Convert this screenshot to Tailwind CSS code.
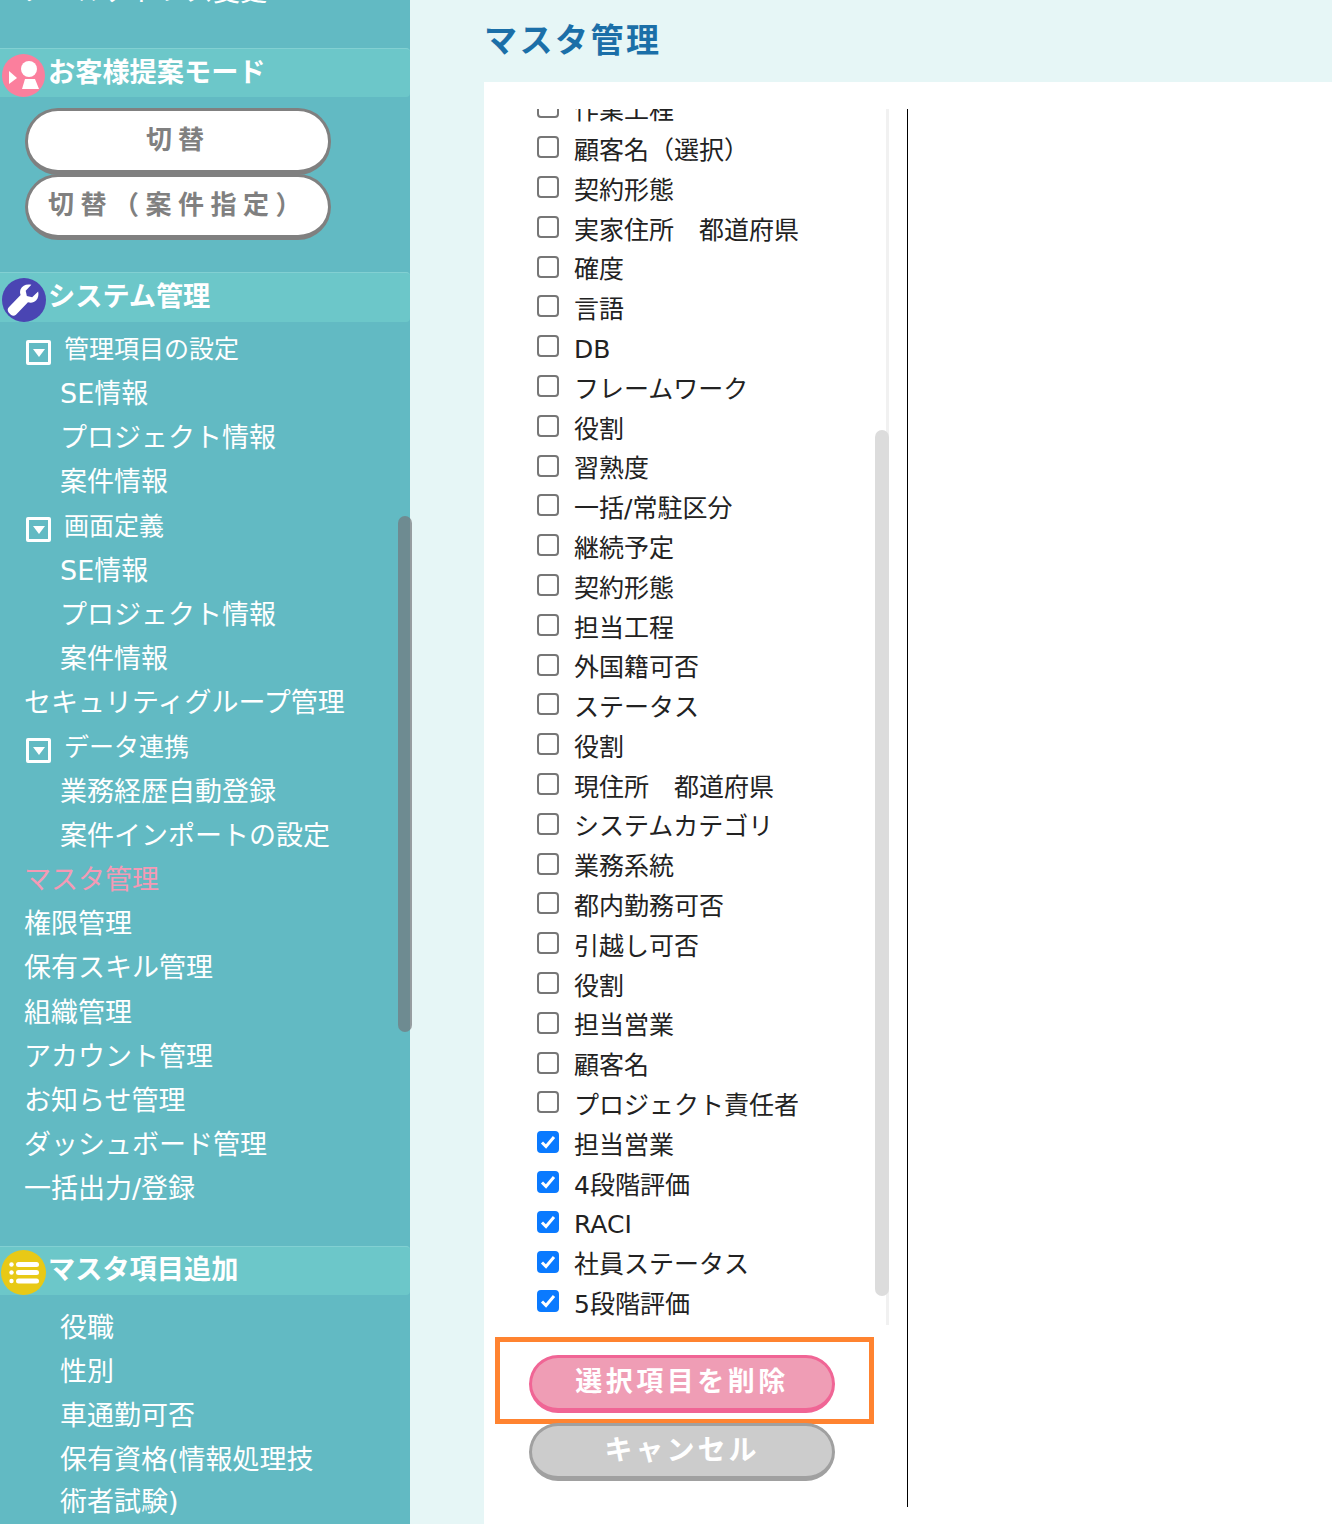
<!doctype html>
<html lang="ja">
<head>
<meta charset="UTF-8" />
<title>マスタ管理</title>
<script src="https://cdn.jsdelivr.net/npm/@tailwindcss/browser@4"></script>
</head>
<body class="m-0 h-[1524px] w-[1332px] overflow-hidden bg-[#e6f6f6] font-['DejaVu_Sans','Noto_Sans_CJK_JP',sans-serif]">
<div class="flex h-[1524px]">

  <!-- sidebar -->
  <aside class="relative h-[1524px] w-[410px] shrink-0 overflow-visible bg-[#62bac3] text-[27px] text-white">
    <div class="h-[48px] overflow-hidden">
      <div class="-mt-[23px] pl-[24px] leading-[30px]">メールアドレス変更</div>
    </div>

    <div class="relative h-[49px] rounded-tr rounded-br border-t border-[#82d0d2] bg-[#6cc7c9] pl-[48px] text-[27.200px] leading-[48px] font-bold">
      <span class="absolute top-[5px] left-[2px] flex h-[43px] w-[43px] items-center justify-center rounded-full bg-[#fb7f9d]">
        <svg width="43" height="43" viewBox="0 0 43 43"><circle cx="27" cy="15" r="8" fill="#fff"/><path d="M20 35l3-10h10l4 10z" fill="#fff"/><path d="M7 17l8 7-8 6z" fill="#fff"/></svg>
      </span>
      お客様提案モード
    </div>
    <div class="flex flex-col pt-[11px] pl-[25px]">
      <button class="h-[67px] w-[306px] rounded-[33px] border-[3px] border-b-[5px] border-[#808080] bg-white pb-[1px] text-center text-[26px] font-bold tracking-[6px] text-[#808080]">切替</button>
      <button class="-mt-[1px] h-[66px] w-[306px] rounded-[33px] border-[3px] border-b-[5px] border-[#808080] bg-white pb-[1px] pl-[20px] text-left text-[26px] font-bold tracking-[6.500px] whitespace-nowrap text-[#808080]">切替（案件指定）</button>
    </div>

    <div class="relative mt-[32px] h-[50px] rounded-tr rounded-br border-t border-[#82d0d2] bg-[#6cc7c9] pl-[48px] text-[27.200px] leading-[48px] font-bold">
      <span class="absolute top-[5px] left-[2px] flex h-[44px] w-[44px] items-center justify-center rounded-full bg-[#4a45b3]">
        <svg width="34" height="34" viewBox="0 0 30 30"><path d="M27.500 7.500l-5.300 5-4.700-1-1-4.700 5-5.200c-4-1-8 .4-9.500 4-.7 1.700-.6 3.500 0 5L1.600 21.500c-1.300 1.300-1.300 3.300 0 4.700l1.800 1.800c1.300 1.200 3.200 1.200 4.500 0L18.500 17c2.800.9 5.500.2 7.300-1.700 1.800-2 2.300-5 1.700-7.800z" fill="#fff"/></svg>
      </span>
      システム管理
    </div>

    <nav class="pt-[6px]">
      <div class="flex h-[44.200px] items-center pl-[26px]">
        <span class="mt-[5px] mr-[13px] flex h-[25px] w-[25px] items-center justify-center rounded-[2px] border-[3px] border-white"><span class="mt-[1px] h-0 w-0 border-x-[6px] border-t-[8px] border-x-transparent border-t-white"></span></span>
        <span class="text-[25px]">管理項目の設定</span>
      </div>
      <div class="flex h-[44.200px] items-center pl-[60px]">SE情報</div>
      <div class="flex h-[44.200px] items-center pl-[60px]">プロジェクト情報</div>
      <div class="flex h-[44.200px] items-center pl-[60px]">案件情報</div>
      <div class="flex h-[44.200px] items-center pl-[26px]">
        <span class="mt-[5px] mr-[13px] flex h-[25px] w-[25px] items-center justify-center rounded-[2px] border-[3px] border-white"><span class="mt-[1px] h-0 w-0 border-x-[6px] border-t-[8px] border-x-transparent border-t-white"></span></span>
        <span class="text-[25px]">画面定義</span>
      </div>
      <div class="flex h-[44.200px] items-center pl-[60px]">SE情報</div>
      <div class="flex h-[44.200px] items-center pl-[60px]">プロジェクト情報</div>
      <div class="flex h-[44.200px] items-center pl-[60px]">案件情報</div>
      <div class="flex h-[44.200px] items-center pl-[24px]">セキュリティグループ管理</div>
      <div class="flex h-[44.200px] items-center pl-[26px]">
        <span class="mt-[5px] mr-[13px] flex h-[25px] w-[25px] items-center justify-center rounded-[2px] border-[3px] border-white"><span class="mt-[1px] h-0 w-0 border-x-[6px] border-t-[8px] border-x-transparent border-t-white"></span></span>
        <span class="text-[25px]">データ連携</span>
      </div>
      <div class="flex h-[44.200px] items-center pl-[60px]">業務経歴自動登録</div>
      <div class="flex h-[44.200px] items-center pl-[60px]">案件インポートの設定</div>
      <div class="flex h-[44.200px] items-center pl-[24px] text-[#f49ab5]">マスタ管理</div>
      <div class="flex h-[44.200px] items-center pl-[24px]">権限管理</div>
      <div class="flex h-[44.200px] items-center pl-[24px]">保有スキル管理</div>
      <div class="flex h-[44.200px] items-center pl-[24px]">組織管理</div>
      <div class="flex h-[44.200px] items-center pl-[24px]">アカウント管理</div>
      <div class="flex h-[44.200px] items-center pl-[24px]">お知らせ管理</div>
      <div class="flex h-[44.200px] items-center pl-[24px]">ダッシュボード管理</div>
      <div class="flex h-[44.200px] items-center pl-[24px]">一括出力/登録</div>
    </nav>

    <div class="relative mt-[34px] h-[49px] rounded-tr rounded-br border-t border-[#82d0d2] bg-[#6cc7c9] pl-[48px] text-[27.200px] leading-[46px] font-bold">
      <span class="absolute top-[3px] left-[1px] flex h-[45px] w-[45px] items-center justify-center rounded-full bg-[#e8c916]">
        <svg width="45" height="45" viewBox="0 0 45 45" fill="#fff"><circle cx="10.500" cy="14.500" r="2.200"/><circle cx="10.500" cy="22.500" r="2.200"/><circle cx="10.500" cy="31" r="2.200"/><rect x="15" y="12" width="23" height="5" rx="2.500"/><rect x="15" y="20" width="23" height="5" rx="2.500"/><rect x="15" y="28.500" width="23" height="5" rx="2.500"/></svg>
      </span>
      マスタ項目追加
    </div>
    <div class="pt-[11px] pl-[60px]">
      <div class="flex h-[44.300px] items-center">役職</div>
      <div class="flex h-[44.300px] items-center">性別</div>
      <div class="flex h-[44.300px] items-center">車通勤可否</div>
      <div class="w-[275px] leading-[42px]">保有資格(情報処理技術者試験)</div>
    </div>

    <div class="absolute top-[516px] left-[398px] h-[516px] w-[14px] rounded-[7px] bg-[#73787c]/70"></div>
  </aside>

  <!-- main -->
  <main class="flex-1 pl-[74px]">
    <h1 class="h-[82px] pt-[16px] text-[33px] leading-[50px] font-bold tracking-[2.500px] text-[#1b6fa8]">マスタ管理</h1>
    <div class="h-[1442px] bg-white pt-[27px]">
      <div class="h-[1398px] w-[424px] border-r border-black">
        <div class="relative h-[1216px] w-[405px] overflow-hidden bg-white">
          <div id="list" class="-mt-[18px] pl-[53px] text-[25px] text-[#222]"></div>
          <div class="absolute top-0 right-0 h-[1216px] w-[3px] bg-[#f1f1f1]"></div>
          <div class="absolute top-[321px] right-0 h-[866px] w-[14px] rounded-[7px] bg-[#dcdcdc]"></div>
        </div>
        <div class="mt-[12px] ml-[11px] h-[87px] w-[379px] border-[5px] border-[#ff8330] pt-[13px] pl-[29px]">
          <button class="h-[58px] w-[306px] rounded-[29px] border-[3px] border-b-[5px] border-[#f06595] bg-[#ef9db5] pb-[2px] text-[27px] font-bold tracking-[3.500px] text-white">選択項目を削除</button>
        </div>
        <div class="mt-[-1px] ml-[45px]">
          <button class="h-[58px] w-[306px] rounded-[29px] border-[3px] border-b-[5px] border-[#a0a0a0] bg-[#cccccc] pb-[1px] text-[28px] font-bold tracking-[3px] text-white">キャンセル</button>
        </div>
      </div>
    </div>
  </main>
</div>
<script>
  const items = ["作業工程","顧客名（選択）","契約形態","実家住所　都道府県","確度","言語","DB","フレームワーク","役割","習熟度","一括/常駐区分","継続予定","契約形態","担当工程","外国籍可否","ステータス","役割","現住所　都道府県","システムカテゴリ","業務系統","都内勤務可否","引越し可否","役割","担当営業","顧客名","プロジェクト責任者"];
  const checked = ["担当営業","4段階評価","RACI","社員ステータス","5段階評価"];
  const list = document.getElementById("list");
  function addRow(text, on) {
    const row = document.createElement("label");
    row.className = "flex h-[39.800px] items-center";
    const wrap = document.createElement("span");
    wrap.className = "relative mr-[15px] mb-[7px] flex h-[22px] w-[22px] shrink-0";
    const box = document.createElement("input");
    box.type = "checkbox";
    box.checked = on;
    box.className = "m-0 h-[22px] w-[22px] appearance-none rounded-[4px] border-2 border-[#767676] bg-white checked:border-[#0a7aff] checked:bg-[#0a7aff]";
    wrap.appendChild(box);
    if (on) {
      wrap.insertAdjacentHTML("beforeend", '<svg class="absolute top-0 left-0" width="22" height="22" viewBox="0 0 22 22"><path d="M5 11.500l4 4L17 6" fill="none" stroke="#fff" stroke-width="3"/></svg>');
    }
    const span = document.createElement("span");
    span.textContent = text;
    row.append(wrap, span);
    list.appendChild(row);
  }
  items.forEach((t) => addRow(t, false));
  checked.forEach((t) => addRow(t, true));
</script>
</body>
</html>
